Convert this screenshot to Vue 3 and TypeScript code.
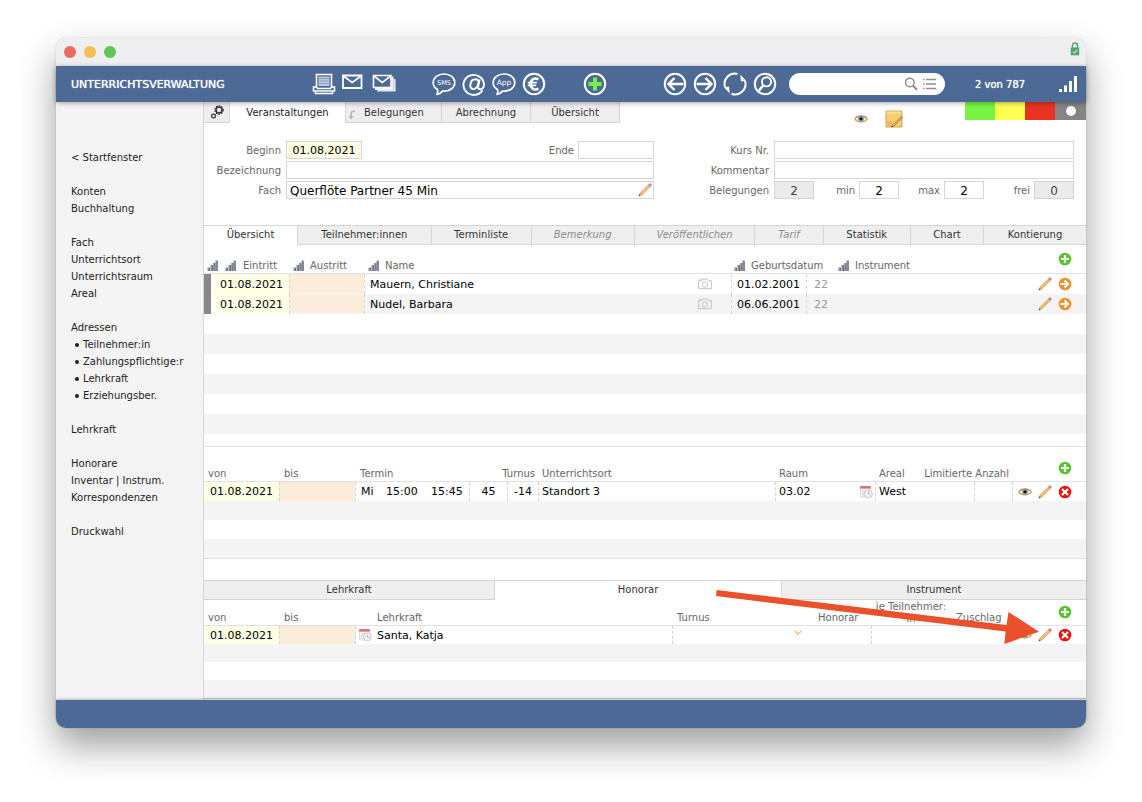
<script setup lang="ts">
import { ref } from 'vue'

interface Tab {
  label: string
  share: number
  muted?: boolean
}
interface NavItem {
  label: string
  sub?: boolean
}
interface Member {
  entry: string
  name: string
  birth: string
  age: number
}

const navGroups: NavItem[][] = [
  [{ label: '< Startfenster' }],
  [{ label: 'Konten' }, { label: 'Buchhaltung' }],
  [{ label: 'Fach' }, { label: 'Unterrichtsort' }, { label: 'Unterrichtsraum' }, { label: 'Areal' }],
  [
    { label: 'Adressen' },
    { label: 'Teilnehmer:in', sub: true },
    { label: 'Zahlungspflichtige:r', sub: true },
    { label: 'Lehrkraft', sub: true },
    { label: 'Erziehungsber.', sub: true },
  ],
  [{ label: 'Lehrkraft' }],
  [{ label: 'Honorare' }, { label: 'Inventar | Instrum.' }, { label: 'Korrespondenzen' }],
  [{ label: 'Druckwahl' }],
]

const outputTools = [
  { icon: 'printer', label: 'Drucken' },
  { icon: 'mail', label: 'Brief' },
  { icon: 'mails', label: 'Serienbrief' },
]
const messageTools = [
  { icon: 'sms', label: 'SMS' },
  { icon: 'at', label: 'E-Mail' },
  { icon: 'push', label: 'App' },
  { icon: 'euro', label: 'Zahlung' },
]
const browseTools = [
  { icon: 'back', label: 'Zurück' },
  { icon: 'forward', label: 'Weiter' },
  { icon: 'reload', label: 'Aktualisieren' },
  { icon: 'find', label: 'Suchen' },
]

const detailTabs: Tab[] = [
  { label: 'Übersicht', share: 94 },
  { label: 'Teilnehmer:innen', share: 134 },
  { label: 'Terminliste', share: 100 },
  { label: 'Bemerkung', share: 103, muted: true },
  { label: 'Veröffentlichen', share: 121, muted: true },
  { label: 'Tarif', share: 68, muted: true },
  { label: 'Statistik', share: 87 },
  { label: 'Chart', share: 73 },
  { label: 'Kontierung', share: 103 },
]
const staffTabs: Tab[] = [
  { label: 'Lehrkraft', share: 291 },
  { label: 'Honorar', share: 287 },
  { label: 'Instrument', share: 305 },
]
const activeDetail = ref('Übersicht')
const activeStaff = ref('Honorar')

const members: Member[] = [
  { entry: '01.08.2021', name: 'Mauern, Christiane', birth: '01.02.2001', age: 22 },
  { entry: '01.08.2021', name: 'Nudel, Barbara', birth: '06.06.2001', age: 22 },
]

const search = ref('')
const begin = ref('01.08.2021')
const end = ref('')
const title = ref('')
const subject = ref('Querflöte Partner 45 Min')
const courseNo = ref('')
const comment = ref('')
const booked = ref('2')
const min = ref('2')
const max = ref('2')
const free = ref('0')
const rhythm = ref('')
</script>

<template>
  <svg class="sprite" aria-hidden="true">
    <defs>
      <symbol id="i-printer" viewBox="0 0 24 24">
        <path d="M4.500 14.500V2.500h15v12" fill="#4d6a96" stroke="#fff" stroke-width="1.600" />
        <path d="M6.500 4.500h11v9.500h-11z" fill="#b9c6dc" />
        <path d="M6.500 6.500h11M6.500 9h11M6.500 11.500h11" stroke="#8fa3c4" />
        <path d="M1.500 15h3l1 1.500h13l1-1.500h3v4h-21z" fill="#4d6a96" stroke="#fff" stroke-width="1.600" />
        <path d="M3.500 19.500v2h17v-2" fill="none" stroke="#fff" stroke-width="1.600" />
      </symbol>
      <symbol id="i-mail" viewBox="0 0 24 24">
        <path d="M1 3.500h18.500v12.500H1z" fill="none" stroke="#fff" stroke-width="1.800" />
        <path d="M2 4.500l8.200 6 8.200-6" fill="none" stroke="#fff" stroke-width="1.600" />
      </symbol>
      <symbol id="i-mails" viewBox="0 0 24 24">
        <path d="M5 18.500h17.500V7" fill="none" stroke="#dfe5ef" stroke-width="2.200" />
        <path d="M3 17h17.500V4.500" fill="none" stroke="#eef1f6" stroke-width="2" />
        <path d="M1.500 3.500H19v12H1.500z" fill="#4d6a96" stroke="#fff" stroke-width="1.600" />
        <path d="M2.500 4.500l7.800 6 7.800-6" fill="none" stroke="#fff" stroke-width="1.600" />
      </symbol>
      <symbol id="i-bubble" viewBox="0 0 24 24">
        <path d="M5.500 17.500C2.500 16 1.200 13.600 1.200 10.800 1.200 5.600 6 2 12 2s10.800 3.600 10.800 8.600-4.800 8.600-10.800 8.600l-1.500-.1c-1.500 1.800-3.300 3-5.500 3.400 .9-1.500 1-3.300.5-5z" fill="none" stroke="#fff" stroke-width="1.700" stroke-linejoin="round" />
      </symbol>
      <symbol id="i-sms" viewBox="0 0 24 24">
        <use href="#i-bubble" />
        <text x="12" y="13" text-anchor="middle" font-size="6.500" fill="#fff" font-family="DejaVu Sans, sans-serif">SMS</text>
      </symbol>
      <symbol id="i-push" viewBox="0 0 24 24">
        <use href="#i-bubble" />
        <text x="12" y="13" text-anchor="middle" font-size="7.500" fill="#fff" font-family="DejaVu Sans, sans-serif">App</text>
      </symbol>
      <symbol id="i-at" viewBox="0 0 24 24">
        <path d="M20.500 18.200A10.300 10 0 1 1 22 12c0 3.500-1.700 5.200-3.700 5.200-1.800 0-2.500-1.200-2.100-3l1.400-6.700" fill="none" stroke="#fff" stroke-width="1.900" />
        <path d="M16.500 11c-.6 3.600-2.600 6-5 6-2.300 0-3.500-1.600-3.200-4.200.4-3.300 2.600-5.500 5.100-5.500 2.200 0 3.500 1.500 3.100 3.700z" fill="none" stroke="#fff" stroke-width="1.900" />
      </symbol>
      <symbol id="i-euro" viewBox="0 0 24 24">
        <circle cx="12" cy="12" r="10.200" fill="none" stroke="#fff" stroke-width="2" />
        <path d="M16.500 7.300C12.500 5 8.600 7.600 8.600 12s3.900 7 7.900 4.700" fill="none" stroke="#fff" stroke-width="2.500" />
        <path d="M5.800 10.600h9M5.800 13.400h8.400" stroke="#fff" stroke-width="1.600" />
      </symbol>
      <symbol id="i-new" viewBox="0 0 24 24">
        <circle cx="12" cy="12" r="10.200" fill="none" stroke="#fff" stroke-width="2" />
        <path d="M12 5.500v13M5.500 12h13" stroke="#73ef4c" stroke-width="4" />
      </symbol>
      <symbol id="i-back" viewBox="0 0 24 24">
        <circle cx="12" cy="12" r="10.200" fill="none" stroke="#fff" stroke-width="2" />
        <path d="M20.500 12H5M11.500 6L5.500 12l6 6" fill="none" stroke="#fff" stroke-width="2.400" />
      </symbol>
      <symbol id="i-forward" viewBox="0 0 24 24">
        <circle cx="12" cy="12" r="10.200" fill="none" stroke="#fff" stroke-width="2" />
        <path d="M3.500 12H19M12.500 6l6 6-6 6" fill="none" stroke="#fff" stroke-width="2.400" />
      </symbol>
      <symbol id="i-reload" viewBox="0 0 24 24">
        <path d="M2 15A10.300 10.300 0 0 1 14.500 2M22 9A10.300 10.300 0 0 1 8.500 21.700" fill="none" stroke="#fff" stroke-width="2" />
        <path d="M17.300 2.500l5.700 6.300-5 .7zM6.700 21.500L1 15.200l5-.7z" fill="#fff" />
      </symbol>
      <symbol id="i-find" viewBox="0 0 24 24">
        <circle cx="12" cy="12" r="10.200" fill="none" stroke="#fff" stroke-width="2" />
        <circle cx="13.500" cy="9.800" r="4.600" fill="none" stroke="#fff" stroke-width="1.900" />
        <path d="M10.500 13.200L6 18.500" stroke="#fff" stroke-width="2.600" />
      </symbol>
      <symbol id="i-signal" viewBox="0 0 20 18">
        <path d="M1 14h3v3H1zM6 10.500h3V17H6zM11 6h3v11h-3zM16 1h3v16h-3z" fill="#fff" />
      </symbol>
      <symbol id="i-bars" viewBox="0 0 11 11">
        <path d="M.5 7.500H3V11H.5zM3.500 5H6v6H3.500zM6.200 3h2v8h-2zM8.500.5h2V11h-2z" fill="#868c9a" />
        <path d="M2.500 8v3M5.500 5.500V11M8 3v8M10.400 1v10" stroke="#5f6574" stroke-width=".7" />
      </symbol>
      <symbol id="i-pencil" viewBox="0 0 14 14">
        <path d="M1 13l.9-2.700L10.600 1.700l1.700 1.700L3.700 12.100z" fill="#f3b45c" stroke="#b07a42" stroke-width=".5" />
        <path d="M2.600 10.800L10.900 2.500" stroke="#fbdc9f" stroke-width=".7" />
        <path d="M10.600 1.700l1-1c.7-.6 2.300 1 1.700 1.700l-1 1z" fill="#c084c4" stroke="#8a6a90" stroke-width=".4" />
        <path d="M.8 13.200l.6-1.600 1 1z" fill="#333" />
      </symbol>
      <symbol id="i-plus" viewBox="0 0 14 14">
        <circle cx="7" cy="7" r="6.300" fill="#54c62d" />
        <path d="M7 3v8M3 7h8" stroke="#fff" stroke-width="2.200" />
      </symbol>
      <symbol id="i-goto" viewBox="0 0 14 14">
        <circle cx="7" cy="7" r="6.300" fill="#ee922c" />
        <path d="M2.500 7h7M6.500 3.500L10 7l-3.500 3.500" fill="none" stroke="#fff" stroke-width="2" />
      </symbol>
      <symbol id="i-remove" viewBox="0 0 14 14">
        <circle cx="7" cy="7" r="6.300" fill="#e3170d" />
        <path d="M4 4l6 6M10 4l-6 6" stroke="#fff" stroke-width="2.200" />
      </symbol>
      <symbol id="i-eye" viewBox="0 0 14 14">
        <path d="M.8 7C3 3.200 11 3.200 13.200 7 11 10.800 3 10.800.8 7z" fill="#f7efdc" stroke="#c99a52" stroke-width="1.200" />
        <circle cx="7" cy="6.800" r="2.900" fill="#7797aa" />
        <circle cx="7" cy="6.700" r="1.500" fill="#10161c" />
        <path d="M1.500 5.500C4.500 3.200 9.500 3.200 12.500 5.500" fill="none" stroke="#a98048" stroke-width=".7" />
      </symbol>
      <symbol id="i-camera" viewBox="0 0 14 14">
        <path d="M.7 3.700h3.200l1-1.700h4.200l1 1.700h3.200v8H.7z" fill="none" stroke="#bdbdbd" stroke-width=".9" stroke-linejoin="round" />
        <circle cx="7" cy="7.500" r="2.700" fill="none" stroke="#bdbdbd" stroke-width=".9" />
        <path d="M1.500 2.500h1.500" stroke="#bdbdbd" />
      </symbol>
      <symbol id="i-calendar" viewBox="0 0 14 14">
        <path d="M1.500 2h10v10h-10z" fill="#f3f1f1" stroke="#d8d4d4" stroke-width=".8" />
        <path d="M1.200 1h10.600v2.600H1.200z" fill="#d07474" />
        <path d="M3 6h5M3 8h4M3 10h3" stroke="#d3cfcf" stroke-width=".8" />
        <circle cx="9.500" cy="9" r="3.900" fill="#f4f4f4" stroke="#c6c6c6" stroke-width=".9" />
        <path d="M9.500 6.500V9l2 .6" fill="none" stroke="#aaa" stroke-width=".8" />
      </symbol>
      <symbol id="i-note" viewBox="0 0 18 18">
        <path d="M1 1h16v16H1z" fill="#f6cf6c" stroke="#c9a45c" />
        <path d="M1.500 1.500h15v2h-15z" fill="#fbdf94" />
        <path d="M2 12.500l4 4M2 12.500h4v4M6 12.500l-4 4" fill="none" stroke="#cfa450" stroke-width=".7" />
        <path d="M6.800 17l.8-2.200 7.800-7.300 1.200 1.200L8.900 16z" fill="#f3ac50" stroke="#8d6636" stroke-width=".6" />
        <path d="M15 7.600l1.300-1.300 1.400 1.400-1.300 1.300z" fill="#a27cc0" />
        <path d="M6.500 17.300l.6-1.500 1 1z" fill="#333" />
      </symbol>
      <symbol id="i-gears" viewBox="0 0 14 14">
        <circle cx="9" cy="5" r="4.200" fill="none" stroke="#333" stroke-width="1.200" stroke-dasharray="1.500 1.200" />
        <circle cx="9" cy="5" r="3" fill="none" stroke="#333" stroke-width="1.600" />
        <circle cx="3.500" cy="11" r="1.900" fill="none" stroke="#333" stroke-width="1.200" />
      </symbol>
      <symbol id="i-turn" viewBox="0 0 8 10">
        <path d="M7 1.500C4.500.8 3 1.800 3 4v4" fill="none" stroke="#b3b3b3" stroke-width="1.400" />
        <path d="M.5 6h5L3 9.500z" fill="#b3b3b3" />
      </symbol>
      <symbol id="i-lock" viewBox="0 0 10 14">
        <path d="M2.500 6V3.500a2.500 2.500 0 0 1 5 0V6" fill="none" stroke="#4fa56b" stroke-width="1.400" />
        <path d="M.8 5.500h8.400v7.800H.8z" fill="#4fa56b" />
        <path d="M3 9.500l1.500 1.700L7.200 7.500" fill="none" stroke="#fff" />
      </symbol>
      <symbol id="i-lens" viewBox="0 0 14 14">
        <circle cx="5.800" cy="5.500" r="4.300" fill="none" stroke="#8b8b8b" stroke-width="1.400" />
        <path d="M9 8.700l4 4" stroke="#8b8b8b" stroke-width="2" />
      </symbol>
      <symbol id="i-list" viewBox="0 0 14 14">
        <path d="M4 2.500h10M4 7h10M4 11.500h10M1 2.500h1.500M1 7h1.500M1 11.500h1.500" stroke="#8f8f8f" stroke-width="1.500" />
      </symbol>
      <symbol id="i-chevron" viewBox="0 0 8 6">
        <path d="M.8 1L4 4.300 7.200 1" fill="none" stroke="#efae62" stroke-width="1.100" />
      </symbol>
    </defs>
  </svg>

  <div class="desktop">
    <div class="window">
      <header class="titlebar">
        <span class="light red"></span>
        <span class="light amber"></span>
        <span class="light green"></span>
        <svg class="lock"><use href="#i-lock" /></svg>
      </header>

      <div class="toolbar">
        <h1>UNTERRICHTSVERWALTUNG</h1>
        <div class="tools output">
          <button v-for="t in outputTools" :key="t.icon" type="button" :aria-label="t.label">
            <svg><use :href="'#i-' + t.icon" /></svg>
          </button>
        </div>
        <div class="tools message">
          <button v-for="t in messageTools" :key="t.icon" type="button" :aria-label="t.label">
            <svg><use :href="'#i-' + t.icon" /></svg>
          </button>
        </div>
        <div class="tools create">
          <button type="button" aria-label="Neu"><svg><use href="#i-new" /></svg></button>
        </div>
        <div class="tools browse">
          <button v-for="t in browseTools" :key="t.icon" type="button" :aria-label="t.label">
            <svg><use :href="'#i-' + t.icon" /></svg>
          </button>
        </div>
        <div class="search">
          <input v-model="search" type="text" aria-label="Suche" />
          <svg class="i14"><use href="#i-lens" /></svg>
          <svg class="i14"><use href="#i-list" /></svg>
        </div>
        <span class="count">2 von 787</span>
        <svg class="signal"><use href="#i-signal" /></svg>
      </div>

      <div class="body">
        <nav class="sidebar">
          <ul v-for="(group, g) in navGroups" :key="g">
            <li v-for="item in group" :key="item.label" :class="{ sub: item.sub }">
              <a href="#">{{ item.label }}</a>
            </li>
          </ul>
        </nav>

        <main>
          <div class="top">
            <div class="toptabs">
              <button type="button" class="gear" aria-label="Einstellungen"><svg class="i14"><use href="#i-gears" /></svg></button>
              <button type="button" class="current">Veranstaltungen</button>
              <button type="button" class="linked"><svg class="turn"><use href="#i-turn" /></svg>Belegungen</button>
              <button type="button">Abrechnung</button>
              <button type="button">Übersicht</button>
            </div>
            <div class="marks">
              <button type="button" aria-label="Ansicht"><svg class="i14"><use href="#i-eye" /></svg></button>
              <button type="button" aria-label="Notiz"><svg class="i18"><use href="#i-note" /></svg></button>
            </div>
            <div class="flags">
              <button type="button" class="go" aria-label="Grün"></button>
              <button type="button" class="wait" aria-label="Gelb"></button>
              <button type="button" class="stop" aria-label="Rot"></button>
              <button type="button" class="none" aria-label="Ohne"><span></span></button>
            </div>
          </div>

          <form class="form" @submit.prevent>
            <div class="fields">
              <div class="line">
                <label for="begin" class="lead">Beginn</label>
                <input id="begin" v-model="begin" class="date filled" type="text" />
                <label for="end" class="push">Ende</label>
                <input id="end" v-model="end" class="date" type="text" />
              </div>
              <div class="line">
                <label for="title" class="lead">Bezeichnung</label>
                <input id="title" v-model="title" class="wide" type="text" />
              </div>
              <div class="line">
                <label for="subject" class="lead">Fach</label>
                <div class="wide picker">
                  <input id="subject" v-model="subject" type="text" />
                  <button type="button" aria-label="Fach bearbeiten"><svg class="i14"><use href="#i-pencil" /></svg></button>
                </div>
              </div>
            </div>
            <div class="fields side">
              <div class="line">
                <label for="course" class="lead">Kurs Nr.</label>
                <input id="course" v-model="courseNo" class="wide" type="text" />
              </div>
              <div class="line">
                <label for="comment" class="lead">Kommentar</label>
                <input id="comment" v-model="comment" class="wide" type="text" />
              </div>
              <div class="line">
                <label for="booked" class="lead">Belegungen</label>
                <input id="booked" v-model="booked" class="num locked" type="text" readonly />
                <label for="min" class="limit">min</label>
                <input id="min" v-model="min" class="num" type="text" />
                <label for="max" class="limit">max</label>
                <input id="max" v-model="max" class="num" type="text" />
                <label for="free" class="push">frei</label>
                <input id="free" v-model="free" class="num locked" type="text" readonly />
              </div>
            </div>
          </form>

          <div class="tabs">
            <button
              v-for="t in detailTabs"
              :key="t.label"
              type="button"
              :class="{ current: t.label === activeDetail, muted: t.muted }"
              :style="{ flexGrow: t.share }"
              @click="activeDetail = t.label"
            >{{ t.label }}</button>
          </div>

          <section class="members">
            <table>
              <colgroup>
                <col class="w10" /><col class="w75" /><col class="w75" /><col /><col class="w38" />
                <col class="w75" /><col class="w29" /><col class="w198" /><col class="w53" />
              </colgroup>
              <thead>
                <tr>
                  <th colspan="2"><span class="sort double"><svg><use href="#i-bars" /></svg><svg><use href="#i-bars" /></svg>Eintritt</span></th>
                  <th><span class="sort"><svg><use href="#i-bars" /></svg>Austritt</span></th>
                  <th colspan="2"><span class="sort"><svg><use href="#i-bars" /></svg>Name</span></th>
                  <th colspan="2"><span class="sort flush"><svg><use href="#i-bars" /></svg>Geburtsdatum</span></th>
                  <th><span class="sort flush"><svg><use href="#i-bars" /></svg>Instrument</span></th>
                  <th><div class="acts"><button type="button" aria-label="Hinzufügen"><svg class="i14"><use href="#i-plus" /></svg></button></div></th>
                </tr>
              </thead>
              <tbody>
                <tr v-for="m in members" :key="m.name">
                  <td class="handle"></td>
                  <td class="from">{{ m.entry }}</td>
                  <td class="until dash"></td>
                  <td class="dash">{{ m.name }}</td>
                  <td><svg class="i14"><use href="#i-camera" /></svg></td>
                  <td class="dash">{{ m.birth }}</td>
                  <td class="dash age">{{ m.age }}</td>
                  <td></td>
                  <td>
                    <div class="acts">
                      <button type="button" aria-label="Bearbeiten"><svg class="i14"><use href="#i-pencil" /></svg></button>
                      <button type="button" aria-label="Öffnen"><svg class="i14"><use href="#i-goto" /></svg></button>
                    </div>
                  </td>
                </tr>
                <tr v-for="n in 6" :key="n"><td colspan="9"></td></tr>
              </tbody>
            </table>
          </section>

          <section class="dates">
            <table>
              <colgroup>
                <col class="w75" /><col class="w76" /><col class="w26" /><col class="w45" /><col class="w43" /><col class="w38" />
                <col class="w31" /><col /><col class="w80" /><col class="w20" /><col class="w45" /><col class="w54" />
                <col class="w38" /><col class="w74" />
              </colgroup>
              <thead>
                <tr>
                  <th>von</th>
                  <th class="inset">bis</th>
                  <th class="inset" colspan="3">Termin</th>
                  <th colspan="2" class="right">Turnus</th>
                  <th>Unterrichtsort</th>
                  <th colspan="2">Raum</th>
                  <th>Areal</th>
                  <th colspan="2" class="right">Limitierte Anzahl</th>
                  <th><div class="acts"><button type="button" aria-label="Hinzufügen"><svg class="i14"><use href="#i-plus" /></svg></button></div></th>
                </tr>
              </thead>
              <tbody>
                <tr>
                  <td class="from">01.08.2021</td>
                  <td class="until dash"></td>
                  <td class="dash">Mi</td>
                  <td>15:00</td>
                  <td>15:45</td>
                  <td class="dash center">45</td>
                  <td class="dash cycle">-14</td>
                  <td class="dash tight">Standort 3</td>
                  <td class="dash tight">03.02</td>
                  <td class="cal"><svg class="i14"><use href="#i-calendar" /></svg></td>
                  <td class="dash tight" colspan="2">West</td>
                  <td class="dash"></td>
                  <td class="dash">
                    <div class="acts">
                      <button type="button" aria-label="Anzeigen"><svg class="i14"><use href="#i-eye" /></svg></button>
                      <button type="button" aria-label="Bearbeiten"><svg class="i14"><use href="#i-pencil" /></svg></button>
                      <button type="button" aria-label="Löschen"><svg class="i14"><use href="#i-remove" /></svg></button>
                    </div>
                  </td>
                </tr>
                <tr v-for="n in 3" :key="n"><td colspan="14"></td></tr>
              </tbody>
            </table>
          </section>

          <section class="staff">
            <div class="tabs">
              <button
                v-for="t in staffTabs"
                :key="t.label"
                type="button"
                :class="{ current: t.label === activeStaff }"
                :style="{ flexGrow: t.share }"
                @click="activeStaff = t.label"
              >{{ t.label }}</button>
            </div>
            <table>
              <colgroup>
                <col class="w75" /><col class="w76" /><col class="w17" /><col /><col class="w131" /><col class="w68" />
                <col class="w80" /><col class="w61" /><col class="w74" />
              </colgroup>
              <thead>
                <tr>
                  <th>von</th>
                  <th class="inset">bis</th>
                  <th></th>
                  <th class="inset">Lehrkraft</th>
                  <th class="inset">Turnus</th>
                  <th class="fee">Honorar</th>
                  <th class="each">je Teilnehmer:<br />in</th>
                  <th class="inset">Zuschlag</th>
                  <th><div class="acts"><button type="button" aria-label="Hinzufügen"><svg class="i14"><use href="#i-plus" /></svg></button></div></th>
                </tr>
              </thead>
              <tbody>
                <tr>
                  <td class="from">01.08.2021</td>
                  <td class="until dash"></td>
                  <td class="dash cal"><svg class="i14"><use href="#i-calendar" /></svg></td>
                  <td>Santa, Katja</td>
                  <td class="dash pick">
                    <div class="choice">
                      <select v-model="rhythm" aria-label="Turnus"><option value=""></option></select>
                      <svg><use href="#i-chevron" /></svg>
                    </div>
                  </td>
                  <td></td>
                  <td class="dash"></td>
                  <td></td>
                  <td>
                    <div class="acts">
                      <button type="button" aria-label="Anzeigen"><svg class="i14"><use href="#i-eye" /></svg></button>
                      <button type="button" aria-label="Bearbeiten"><svg class="i14"><use href="#i-pencil" /></svg></button>
                      <button type="button" aria-label="Löschen"><svg class="i14"><use href="#i-remove" /></svg></button>
                    </div>
                  </td>
                </tr>
                <tr v-for="n in 3" :key="n"><td colspan="9"></td></tr>
              </tbody>
            </table>
            <svg class="pointer" viewBox="0 0 323 55" aria-hidden="true">
              <path d="M.6 0L290.500 35l2-13L323 41.700 288.300 54l1.300-12.500L0 6z" fill="#e9502b" />
            </svg>
          </section>
        </main>
      </div>

      <footer></footer>
    </div>
  </div>
</template>

<style>
body {
  margin: 0;
  background: #fff;
}
</style>

<style scoped>
.sprite {
  position: absolute;
  width: 0;
  height: 0;
}
.desktop {
  box-sizing: border-box;
  min-height: 100vh;
  padding: 38px 56px 74px;
  display: flex;
  overflow: hidden;
  font: 10px/17px Verdana, "DejaVu Sans", sans-serif;
  color: #333;
}
.window {
  flex: 1;
  min-width: 0;
  display: flex;
  flex-direction: column;
  border-radius: 10px;
  background: #fff;
  box-shadow: 0 18px 36px rgba(0, 0, 0, 0.38), 0 0 1px rgba(0, 0, 0, 0.4);
}
button {
  font: inherit;
  color: inherit;
  background: none;
  border: 0;
  padding: 0;
  margin: 0;
  cursor: pointer;
}
svg {
  display: block;
  flex: none;
}
.i14 {
  width: 14px;
  height: 14px;
}
.i18 {
  width: 18px;
  height: 18px;
}

.titlebar {
  height: 28px;
  display: flex;
  align-items: center;
  gap: 8px;
  padding: 0 6px 0 8px;
  border-radius: 10px 10px 0 0;
  background: #efeff1;
}
.light {
  width: 12px;
  height: 12px;
  border-radius: 50%;
}
.red { background: #ec6a5e; }
.amber { background: #f4bf4f; }
.green { background: #61c554; }
.lock {
  width: 10px;
  height: 14px;
  margin: 0 0 6px auto;
}

.toolbar {
  position: relative;
  z-index: 1;
  height: 36px;
  display: flex;
  align-items: center;
  padding: 0 8px 0 15px;
  background: #4d6a96;
  color: #fff;
  box-shadow: 0 1px 5px rgba(0, 0, 0, 0.35);
}
.toolbar h1 {
  width: 241px;
  margin: 0;
  font-size: 11px;
  font-weight: 400;
  text-shadow: 0 0 1px #fff;
}
.tools {
  display: flex;
  gap: 6px;
}
.tools svg {
  width: 24px;
  height: 24px;
}
.message {
  margin-left: 36px;
}
.create {
  margin-left: 37px;
}
.browse {
  margin-left: 56px;
}
.search {
  width: 156px;
  height: 22px;
  box-sizing: border-box;
  margin-left: 12px;
  padding: 0 9px 0 12px;
  display: flex;
  align-items: center;
  gap: 4px;
  border-radius: 11px;
  background: #fff;
}
.search input {
  flex: 1;
  min-width: 0;
  border: 0;
  padding: 0;
  outline: 0;
  background: none;
  font: inherit;
}
.count {
  margin-left: 30px;
  text-shadow: 0 0 1px #fff;
}
.signal {
  width: 20px;
  height: 18px;
  margin-left: auto;
}

.body {
  flex: 1;
  display: flex;
}
.sidebar {
  width: 147px;
  flex: none;
  box-sizing: border-box;
  padding: 47px 0 0 15px;
  background: #f4f4f4;
}
.sidebar ul {
  list-style: none;
  margin: 0 0 17px;
  padding: 0;
}
.sidebar a {
  color: #222;
  text-decoration: none;
}
.sidebar .sub {
  display: flex;
  align-items: center;
  gap: 4px;
  padding-left: 4px;
}
.sidebar .sub::before {
  content: "";
  width: 4px;
  height: 4px;
  border-radius: 50%;
  background: #222;
}
main {
  flex: 1;
  min-width: 0;
  border-left: 1px solid #d5d5d5;
}

.top {
  display: flex;
  align-items: flex-start;
}
.toptabs {
  display: flex;
}
.toptabs button {
  box-sizing: border-box;
  width: 89px;
  height: 21px;
  border: solid #d5d5d5;
  border-width: 0 1px 1px 0;
  background: #eee;
}
.toptabs .gear {
  width: 26px;
  display: flex;
  align-items: center;
  justify-content: center;
}
.toptabs .current {
  width: 115px;
  border: 0;
  background: #fff;
  color: #222;
}
.toptabs .linked {
  width: 97px;
  display: flex;
  align-items: center;
  gap: 8px;
  padding-left: 2px;
  border-left-width: 1px;
}
.turn {
  width: 8px;
  height: 10px;
  margin-top: 6px;
}
.marks {
  margin-left: auto;
  display: flex;
  align-items: center;
  gap: 17px;
  padding: 8px 62px 0 0;
}
.flags {
  display: flex;
}
.flags button {
  width: 30px;
  height: 18px;
}
.flags .go { background: #77f544; }
.flags .wait { background: #ffff54; }
.flags .stop { background: #e83323; }
.flags .none {
  width: 31px;
  display: flex;
  align-items: center;
  justify-content: center;
  background: #858585;
}
.flags span {
  width: 10px;
  height: 10px;
  border-radius: 50%;
  background: #fafafa;
}

.form {
  display: flex;
  padding: 13px 12px 26px 0;
}
.fields {
  flex: 1;
  display: flex;
  flex-direction: column;
  gap: 2px;
}
.side {
  flex: 0 0 420px;
}
.line {
  display: flex;
  align-items: center;
  height: 18px;
}
.line label {
  padding-top: 2px;
  color: #666;
  line-height: 18px;
}
.line .lead {
  width: 77px;
  margin-right: 5px;
  text-align: right;
}
.side .lead {
  width: 115px;
}
.push {
  margin-left: auto;
  margin-right: 4px;
}
.limit {
  width: 41px;
  margin-right: 4px;
  text-align: right;
}
.line input,
.picker {
  box-sizing: border-box;
  height: 18px;
  border: 1px solid #d5d5d5;
  border-radius: 0;
  padding: 1px 3px 0;
  outline: 0;
  background: #fff;
  color: #000;
  font: 12px/15px Verdana, "DejaVu Sans", sans-serif;
}
.line .date {
  width: 76px;
  font-size: 11px;
  text-align: center;
}
.line .filled {
  background: #ffffe6;
}
.line .wide {
  flex: 1;
  min-width: 0;
}
.picker {
  display: flex;
  align-items: center;
}
.line .picker {
  padding: 0 1px 0 3px;
}
.line .picker input {
  flex: 1;
  min-width: 0;
  height: 16px;
  border: 0;
  padding: 1px 0 0;
}
.line .num {
  width: 40px;
  text-align: center;
}
.line .locked {
  background: #ebebeb;
  color: #444;
}

.tabs {
  display: flex;
  border-top: 1px solid #d5d5d5;
}
.tabs button {
  flex: 1 1 0;
  box-sizing: border-box;
  height: 19px;
  padding-bottom: 2px;
  border: solid #d5d5d5;
  border-width: 0 1px 1px 0;
  background: #efefef;
}
.tabs button:last-child {
  border-right-width: 0;
}
.tabs .current {
  border-bottom-color: transparent;
  background: #fff;
}
.tabs .muted {
  color: #8c8c8c;
  font-style: italic;
}

table {
  width: 100%;
  table-layout: fixed;
  border-collapse: separate;
  border-spacing: 0;
}
th {
  box-sizing: border-box;
  padding: 0 4px;
  border-bottom: 1px solid #e2e2e2;
  text-align: left;
  vertical-align: bottom;
  font-weight: 400;
  line-height: 15px;
  color: #666;
  white-space: nowrap;
}
td {
  box-sizing: border-box;
  padding: 0 5px;
  font-size: 11px;
  line-height: 17px;
  color: #000;
  white-space: nowrap;
}
tbody tr:nth-child(even) {
  background: #f4f4f4;
}
.dash {
  border-left: 1px dashed #d2d2d2;
}
td.from {
  padding-left: 6px;
  background: #ffffe6;
}
.until {
  background: #fcecdb;
}
.right {
  text-align: right;
}
th.right {
  padding-right: 3px;
}
th.inset {
  padding-left: 5px;
}
td.cycle {
  padding-right: 6px;
  text-align: right;
}
td.center {
  text-align: center;
}
td.tight {
  padding-left: 3px;
}
.acts {
  display: flex;
  justify-content: flex-end;
  gap: 6px;
  padding-right: 9px;
}
th .acts {
  padding: 0 10px 6px 0;
}
.w10 { width: 10px; }
.w17 { width: 17px; }
.w20 { width: 20px; }
.w26 { width: 26px; }
.w29 { width: 29px; }
.w31 { width: 31px; }
.w38 { width: 38px; }
.w43 { width: 43px; }
.w45 { width: 45px; }
.w53 { width: 53px; }
.w54 { width: 54px; }
.w61 { width: 61px; }
.w68 { width: 68px; }
.w74 { width: 74px; }
.w75 { width: 75px; }
.w76 { width: 76px; }
.w80 { width: 80px; }
.w131 { width: 131px; }
.w198 { width: 198px; }

.members {
  padding-bottom: 12px;
  border-bottom: 1px solid #e2e2e2;
}
.members th {
  height: 29px;
}
.members th .acts {
  padding-bottom: 7px;
}
.members td {
  height: 20px;
}
.members td.from,
.members td.until {
  box-shadow: inset 0 -1px #f8f8f6;
}
.sort {
  display: flex;
  align-items: center;
  gap: 6px;
}
.sort svg {
  width: 11px;
  height: 11px;
}
.double {
  gap: 7px;
  margin-left: -1px;
}
.flush {
  margin-left: -1px;
}
td.handle {
  padding: 0;
  border-left: 7px solid #888;
  background: #fff;
}
td.age {
  padding-left: 7px;
  color: #999;
}

.dates {
  border-bottom: 1px solid #e2e2e2;
}
.dates th {
  height: 35px;
}
.dates td {
  height: 19px;
}
td.cal {
  padding: 0 2px;
}
.dates td.cal {
  padding: 0 4px;
}

.staff {
  position: relative;
  margin-top: 21px;
  border-bottom: 1px solid #c8c8c8;
}
.staff th {
  height: 26px;
}
.staff td {
  height: 18px;
}
th.fee {
  padding-left: 15px;
}
.staff th.each {
  padding: 0;
  text-align: center;
  line-height: 12px;
}
td.pick {
  padding-right: 1px;
}
.choice {
  position: relative;
}
.choice select {
  display: block;
  width: 100%;
  height: 14px;
  border: 0;
  padding: 0;
  background: none;
  appearance: none;
}
.choice svg {
  position: absolute;
  right: 0;
  top: 2px;
  width: 8px;
  height: 6px;
}
.pointer {
  position: absolute;
  right: 47px;
  top: 10px;
  width: 323px;
  height: 55px;
  pointer-events: none;
}

footer {
  position: relative;
  height: 28px;
  border-radius: 0 0 10px 10px;
  background: #4d6a96;
  box-shadow: 0 -1px 3px rgba(0, 0, 0, 0.25);
}
</style>
